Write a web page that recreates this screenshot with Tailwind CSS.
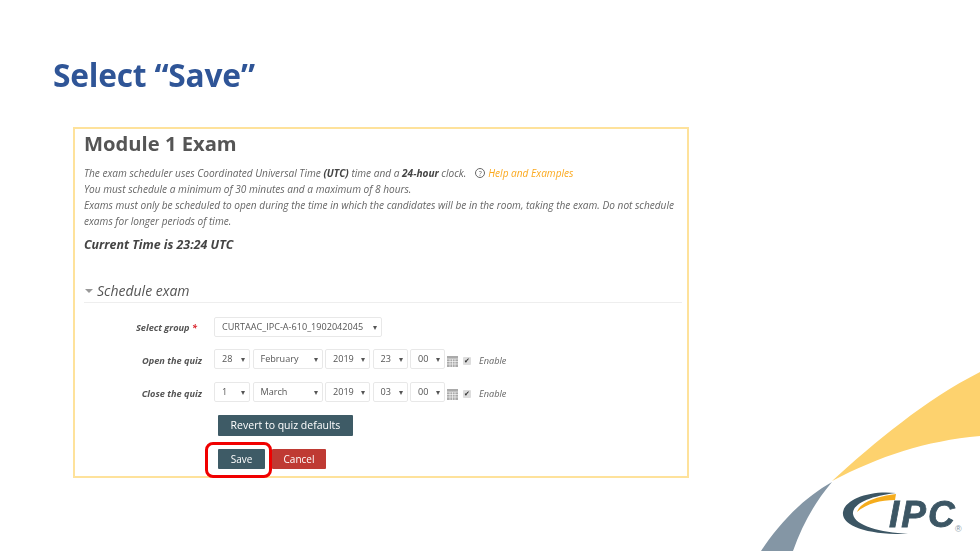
<!DOCTYPE html>
<html lang="en">
<head>
    <meta charset="UTF-8">
    <title>Select Save</title>
    <script src="https://cdn.jsdelivr.net/npm/@tailwindcss/browser@4"></script>
</head>
<body class="bg-white">
<div class="relative w-[980px] h-[551px] overflow-hidden bg-white">

    <!-- corner arcs -->
    <svg class="absolute left-0 top-0 blur-[0.3px]" width="980" height="551" viewBox="0 0 980 551">
        <path d="M832 481 C875 442 925 400 980 372 L980 436 C925 441 880 456 832 481 Z" fill="#fdd26e"/>
        <path d="M832 482 C805 497 780 522 761 551 L793 551 C802 525 815 502 832 482 Z" fill="#8496a5"/>
        <path d="M896 493 C870 490 845 499 843 512 C841 526 868 535 908 534 C880 532 855 526 853 514 C852 504 870 496 896 493 Z" fill="#3c5664"/>
        <path d="M896 494 L895 500 C880 500 866 504 857 512 C860 502 878 496 896 494 Z" fill="#f5ac1c"/>
    </svg>
    <div class="absolute left-[889px] top-[502px] font-['Liberation_Sans'] font-bold italic text-[37px] leading-[26px] text-[#3c5664] [-webkit-text-stroke:0.8px_#3c5664] blur-[0.3px]"><span class="tracking-[2px]">IP</span>C</div>
    <div class="absolute left-[955px] top-[525px] font-['Liberation_Sans'] text-[9px] leading-[9px] text-[#8496a5]">®</div>

    <div class="relative pt-[56px] pl-[53px]">
        <h1 class="font-['Open_Sans'] font-bold text-[31.7px] leading-[38px] tracking-[-0.2px] text-[#2f5597] blur-[0.3px]">Select “Save”</h1>
    </div>

    <div class="relative ml-[73px] mt-[33px] w-[616px] h-[351px] border-2 border-[#fee29b] pl-[9px] pr-[5px] font-['Open_Sans'] blur-[0.4px]">
        <h2 class="-mt-[1px] font-bold text-[20.2px] leading-[30px] text-[#555]">Module 1 Exam</h2>
        <div class="mt-[7px] italic text-[10.1px] leading-[16px] text-[#666]">
            <p class="flex items-center">
                <span>The exam scheduler uses Coordinated Universal Time <b class="text-[#444]">(UTC)</b> time and a <b class="text-[#444]">24-hour</b> clock.</span>
                <span class="ml-[9px] mr-[3px] flex h-[10px] w-[10px] items-center justify-center rounded-full border border-[#666] not-italic text-[7px] leading-none">?</span>
                <a href="#" class="text-[#fba91f]">Help and Examples</a>
            </p>
            <p>You must schedule a minimum of 30 minutes and a maximum of 8 hours.</p>
            <p>Exams must only be scheduled to open during the time in which the candidates will be in the room, taking the exam. Do not schedule exams for longer periods of time.</p>
        </div>
        <p class="mt-[8px] font-bold italic text-[12.4px] leading-[16px] text-[#444]">Current Time is 23:24 UTC</p>

        <div class="mt-[28px] flex items-center border-b border-[#eee] pb-[2px] h-[22px]">
            <span class="mr-[4px] ml-[1px] h-0 w-0 border-x-[4px] border-t-[4px] border-x-transparent border-t-[#999]"></span>
            <span class="italic text-[14px] text-[#555]">Schedule exam</span>
        </div>

        <div class="mt-[14px] flex h-[20px] items-center">
            <label class="mt-[2px] w-[113px] text-right font-bold italic text-[9.2px] text-[#555]">Select group <span class="text-[#d9262e]">*</span></label>
            <div class="ml-[17px] flex h-[20px] w-[168px] items-center justify-between rounded-[2px] border border-[#e8e8e8] pl-[7px] pr-[4px] text-[9.1px] text-[#555]">CURTAAC_IPC-A-610_1902042045<span class="text-[8px]">▾</span></div>
        </div>

        <div class="mt-[12px] flex h-[20px] items-center">
            <label class="mt-[3px] w-[118px] text-right font-bold italic text-[9.2px] text-[#555]">Open the quiz</label>
            <div class="ml-[12px] flex gap-[2.5px]">
                <div class="flex h-[20px] w-[36px] items-center justify-between rounded-[2px] border border-[#e8e8e8] pl-[7px] pr-[4px] text-[9.1px] text-[#555]">28<span class="text-[8px]">▾</span></div>
                <div class="flex h-[20px] w-[70px] items-center justify-between rounded-[2px] border border-[#e8e8e8] pl-[7px] pr-[4px] text-[9.1px] text-[#555]">February<span class="text-[8px]">▾</span></div>
                <div class="flex h-[20px] w-[45px] items-center justify-between rounded-[2px] border border-[#e8e8e8] pl-[7px] pr-[4px] text-[9.1px] text-[#555]">2019<span class="text-[8px]">▾</span></div>
                <div class="flex h-[20px] w-[35px] items-center justify-between rounded-[2px] border border-[#e8e8e8] pl-[7px] pr-[4px] text-[9.1px] text-[#555]">23<span class="text-[8px]">▾</span></div>
                <div class="flex h-[20px] w-[35px] items-center justify-between rounded-[2px] border border-[#e8e8e8] pl-[7px] pr-[4px] text-[9.1px] text-[#555]">00<span class="text-[8px]">▾</span></div>
            </div>
            <svg class="ml-[2px] mt-[5px]" width="11" height="11" viewBox="0 0 11 11"><rect width="11" height="11" fill="#aaa"/><path d="M0 3H11M0 5.5H11M0 8H11M3 3V11M5.5 3V11M8 3V11" stroke="#fff" stroke-width="0.6"/></svg>
            <span class="ml-[5px] mt-[3px] flex h-[8px] w-[8px] items-center justify-center rounded-[1px] bg-[#ddd] text-[7px] leading-none text-[#333]">✔</span>
            <span class="ml-[8px] mt-[3px] italic text-[9.2px] text-[#666]">Enable</span>
        </div>

        <div class="mt-[13px] flex h-[20px] items-center">
            <label class="mt-[3px] w-[118px] text-right font-bold italic text-[9.2px] text-[#555]">Close the quiz</label>
            <div class="ml-[12px] flex gap-[2.5px]">
                <div class="flex h-[20px] w-[36px] items-center justify-between rounded-[2px] border border-[#e8e8e8] pl-[7px] pr-[4px] text-[9.1px] text-[#555]">1<span class="text-[8px]">▾</span></div>
                <div class="flex h-[20px] w-[70px] items-center justify-between rounded-[2px] border border-[#e8e8e8] pl-[7px] pr-[4px] text-[9.1px] text-[#555]">March<span class="text-[8px]">▾</span></div>
                <div class="flex h-[20px] w-[45px] items-center justify-between rounded-[2px] border border-[#e8e8e8] pl-[7px] pr-[4px] text-[9.1px] text-[#555]">2019<span class="text-[8px]">▾</span></div>
                <div class="flex h-[20px] w-[35px] items-center justify-between rounded-[2px] border border-[#e8e8e8] pl-[7px] pr-[4px] text-[9.1px] text-[#555]">03<span class="text-[8px]">▾</span></div>
                <div class="flex h-[20px] w-[35px] items-center justify-between rounded-[2px] border border-[#e8e8e8] pl-[7px] pr-[4px] text-[9.1px] text-[#555]">00<span class="text-[8px]">▾</span></div>
            </div>
            <svg class="ml-[2px] mt-[5px]" width="11" height="11" viewBox="0 0 11 11"><rect width="11" height="11" fill="#aaa"/><path d="M0 3H11M0 5.5H11M0 8H11M3 3V11M5.5 3V11M8 3V11" stroke="#fff" stroke-width="0.6"/></svg>
            <span class="ml-[5px] mt-[3px] flex h-[8px] w-[8px] items-center justify-center rounded-[1px] bg-[#ddd] text-[7px] leading-none text-[#333]">✔</span>
            <span class="ml-[8px] mt-[3px] italic text-[9.2px] text-[#666]">Enable</span>
        </div>

        <div class="mt-[9px] ml-[134px]">
            <button class="h-[21px] w-[135px] rounded-[1px] bg-[#3e5b66] text-[10.5px] text-white">Revert to quiz defaults</button>
        </div>
        <div class="mt-[13px] ml-[134px] flex gap-[7px]">
            <button class="h-[20px] w-[47px] rounded-[1px] bg-[#3e5b66] text-[10px] text-white">Save</button>
            <button class="h-[20px] w-[54px] rounded-[1px] bg-[#bf3a33] text-[10px] text-white">Cancel</button>
        </div>

        <!-- callout around Save -->
        <div class="absolute left-[129.5px] top-[312.5px] h-[36px] w-[67px] rounded-[8px] border-[3px] border-[#f00000]"></div>
    </div>
</div>
</body>
</html>
